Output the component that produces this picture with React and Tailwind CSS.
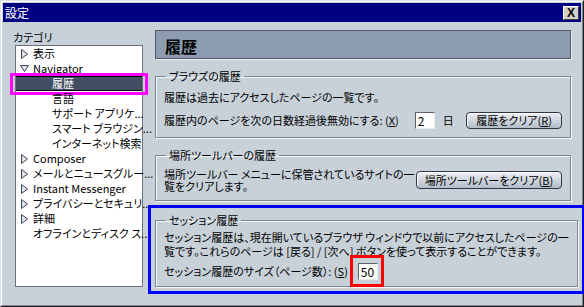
import React from 'react';

const font = "font-['Noto_Sans_CJK_JP','Noto_Sans',sans-serif] [font-feature-settings:'palt']";

function Twisty({ open }) {
  if (open) {
    return (
      <svg width="9" height="9" viewBox="0 0 9 9" className="shrink-0">
        <polygon points="0.5,1.5 8.5,1.5 4.5,7.5" fill="#dfe4ea" stroke="#3c4454" strokeWidth="1" />
      </svg>
    );
  }
  return (
    <svg width="9" height="10" viewBox="0 0 9 10" className="shrink-0">
      <polygon points="1.5,0.5 7.5,5 1.5,9.5" fill="#dfe4ea" stroke="#3c4454" strokeWidth="1" />
    </svg>
  );
}

function TreeRow({ label, level = 0, twisty, selected }) {
  return (
    <div
      className={
        'relative flex h-[15px] items-center whitespace-nowrap leading-[15px] ' +
        (selected ? 'bg-[#424f63] text-white border-y border-black' : 'text-black')
      }
    >
      {level === 0 ? (
        <div className="flex w-[17px] shrink-0 justify-start pl-[4px]">
          {twisty ? <Twisty open={twisty === 'open'} /> : null}
        </div>
      ) : (
        <div className="w-[36px] shrink-0" />
      )}
      <span>{label}</span>
      {selected && (
        <div className="pointer-events-none absolute -left-[6px] -right-[6px] -top-[4px] -bottom-[5px] border-[3px] border-[#ff00ff]" />
      )}
    </div>
  );
}

function Button({ children, className = '' }) {
  return (
    <div
      className={
        'flex items-center justify-center whitespace-nowrap rounded-[4px] border border-[#2e3646] bg-gradient-to-b from-[#eef1f4] to-[#b3bdc9] text-black shadow-[inset_1px_1px_0_#ffffff] ' +
        className
      }
    >
      {children}
    </div>
  );
}

function Field({ value }) {
  return (
    <div className="flex h-[17px] w-[20px] items-center border border-t-[#5a6270] border-l-[#5a6270] border-r-[#e8ecf0] border-b-[#e8ecf0] bg-white pl-[2px] text-[12px] text-black">
      {value}
    </div>
  );
}

function Group({ title, children, className = '' }) {
  return (
    <fieldset
      className={
        'relative border border-[#7e8692] px-[8px] shadow-[inset_1px_1px_0_#f4f6f8,1px_1px_0_#f4f6f8] ' + className
      }
    >
      <legend className="ml-[2px] px-[3px] leading-[14px]">{title}</legend>
      {children}
    </fieldset>
  );
}

export default function App() {
  return (
    <div className={`${font} text-[11px] h-[307px] w-[584px] overflow-hidden bg-[#c8d0d8] text-black`}>
      <div className="h-full w-full border border-t-[#dfe3e8] border-l-[#dfe3e8] border-r-[#202020] border-b-[#202020]">
        <div className="flex h-full w-full flex-col border border-t-white border-l-white border-r-[#7c828c] border-b-[#7c828c] p-[1px]">
          {/* title bar */}
          <div className="flex h-[19px] items-center justify-between bg-[#000080] pl-[2px] pr-[2px]">
            <span className="text-[12px] leading-[19px] text-white">設定</span>
            <div className="flex h-[14px] w-[16px] items-center justify-center border border-t-white border-l-white border-r-[#404040] border-b-[#404040] bg-[#d4d0c8] font-['Liberation_Sans',sans-serif] text-[12px] font-bold leading-none text-black">
              X
            </div>
          </div>

          {/* body */}
          <div className="flex flex-1 pt-[8px] pl-[10px]">
            {/* category tree */}
            <div className="flex w-[133px] flex-col">
              <div className="h-[14px] leading-[14px]">カテゴリ</div>
              <div className="ml-[2px] mt-[1px] flex h-[242px] w-[128px] flex-col border border-[#6a707c] bg-white">
                <TreeRow label="表示" twisty="closed" />
                <TreeRow label="Navigator" twisty="open" />
                <TreeRow label="履歴" level={1} selected />
                <TreeRow label="言語" level={1} />
                <TreeRow label="サポート アプリケ..." level={1} />
                <TreeRow label="スマート ブラウジン..." level={1} />
                <TreeRow label="インターネット検索" level={1} />
                <TreeRow label="Composer" twisty="closed" />
                <TreeRow label="メールとニュースグルー..." twisty="closed" />
                <TreeRow label="Instant Messenger" twisty="closed" />
                <TreeRow label="プライバシーとセキュリ..." twisty="closed" />
                <TreeRow label="詳細" twisty="closed" />
                <TreeRow label="オフラインとディスク ス..." />
              </div>
            </div>

            {/* right panel */}
            <div className="ml-[9px] flex w-[416px] flex-col">
              <div className="flex h-[29px] items-center border border-[#4e5868] bg-[#8d9caf] pl-[9px] pt-[2px] shadow-[1px_1px_0_#eef1f4]">
                <span className="text-[16px] font-bold leading-none">履歴</span>
              </div>

              <Group title="ブラウズの履歴" className="mt-[10px] pb-[8px]">
                <div className="mt-[7px] h-[14px] whitespace-nowrap leading-[14px]">
                  履歴は過去にアクセスしたページの一覧です。
                </div>
                <div className="mt-[8px] flex h-[17px] items-center whitespace-nowrap">
                  <span>
                    履歴内のページを次の日数経過後無効にする: (<span className="underline">X</span>)
                  </span>
                  <div className="ml-[16px]">
                    <Field value="2" />
                  </div>
                  <span className="ml-[8px]">日</span>
                  <Button className="ml-auto h-[17px] w-[96px]">
                    履歴をクリア(<span className="underline">R</span>)
                  </Button>
                </div>
              </Group>

              <Group title="場所ツールバーの履歴" className="mt-[10px] pb-[8px]">
                <div className="mt-[6px] flex items-center">
                  <div className="whitespace-nowrap leading-[12px]">
                    場所ツールバー メニューに保管されているサイトの一
                    <br />
                    覧をクリアします。
                  </div>
                  <Button className="ml-auto h-[18px] w-[146px]">
                    場所ツールバーをクリア(<span className="underline">B</span>)
                  </Button>
                </div>
              </Group>

              <Group title="セッション履歴" className="mt-[12px] pb-[6px]">
                <div className="pointer-events-none absolute -left-[8px] -right-[8px] -top-[22px] -bottom-[8px] border-[3px] border-[#0000ff]" />
                <div className="mt-[3px] whitespace-nowrap leading-[14px]">
                  セッション履歴は、現在開いているブラウザ ウィンドウで以前にアクセスしたページの一
                  <br />
                  覧です。これらのページは [戻る] / [次へ] ボタンを使って表示することができます。
                </div>
                <div className="mt-[5px] flex h-[17px] items-center whitespace-nowrap">
                  <span>
                    セッション履歴のサイズ（ページ数）: (<span className="underline">S</span>)
                  </span>
                  <div className="relative ml-[10px]">
                    <Field value="50" />
                    <div className="pointer-events-none absolute -left-[8px] -right-[6px] -top-[8px] -bottom-[7px] border-[3px] border-[#ff0000]" />
                  </div>
                </div>
              </Group>
            </div>
          </div>
        </div>
      </div>
    </div>
  );
}
